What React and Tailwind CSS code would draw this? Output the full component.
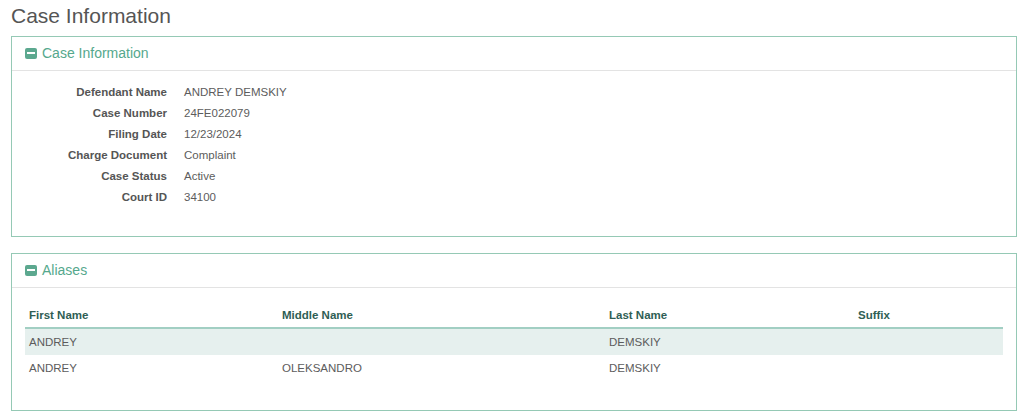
import React from 'react';

const details = [
  ['Defendant Name', 'ANDREY DEMSKIY'],
  ['Case Number', '24FE022079'],
  ['Filing Date', '12/23/2024'],
  ['Charge Document', 'Complaint'],
  ['Case Status', 'Active'],
  ['Court ID', '34100'],
];

const aliases = [
  { first: 'ANDREY', middle: '', last: 'DEMSKIY', suffix: '' },
  { first: 'ANDREY', middle: 'OLEKSANDRO', last: 'DEMSKIY', suffix: '' },
];

const MinusBox = () => (
  <span className="w-[12px] h-[11px] rounded-[2px] bg-[#5ca88f] flex items-center justify-center shrink-0">
    <span className="w-[8px] h-[2px] bg-white" />
  </span>
);

const Panel = ({ title, children, className = '' }) => (
  <section className={`border border-[#95c9b5] bg-white ${className}`}>
    <div className="h-[34px] flex items-center gap-[5px] px-[13px] pb-[1px] border-b border-[#e3e3e3]">
      <MinusBox />
      <h3 className="text-[14px] text-[#55a88d] leading-none">{title}</h3>
    </div>
    {children}
  </section>
);

export default function App() {
  return (
    <div className="w-[1024px] h-[419px] bg-white pl-[11px] pr-[7px] pt-[3px] text-[#555] font-['Liberation_Sans',Arial,sans-serif] overflow-hidden">
      <h1 className="text-[21px] leading-[26px] text-[#555] mb-[7px]">Case Information</h1>

      <Panel title="Case Information" className="h-[201px]">
        <dl className="grid grid-cols-[155px_1fr] gap-x-[17px] pt-[11px] text-[11.5px] leading-[21px]">
          {details.map(([label, value]) => (
            <React.Fragment key={label}>
              <dt className="text-right font-bold text-[#555]">{label}</dt>
              <dd className="text-[#5c5c5c]">{value}</dd>
            </React.Fragment>
          ))}
        </dl>
      </Panel>

      <Panel title="Aliases" className="mt-[16px] h-[158px]">
        <div className="px-[13px] pt-[16px]">
          <table className="w-full text-[11.5px] border-collapse">
            <thead>
              <tr className="border-b-2 border-[#a2cfc3] text-left text-[#2f5e54]">
                <th className="w-[253px] px-[4px] h-[24px] font-bold">First Name</th>
                <th className="w-[327px] px-[4px] font-bold">Middle Name</th>
                <th className="w-[249px] px-[4px] font-bold">Last Name</th>
                <th className="px-[4px] font-bold">Suffix</th>
              </tr>
            </thead>
            <tbody className="text-[#5c5c5c]">
              {aliases.map((a, i) => (
                <tr key={i} className={i % 2 === 0 ? 'bg-[#e6f0ee]' : ''}>
                  <td className="px-[4px] h-[27px] pt-[1px]">{a.first}</td>
                  <td className="px-[4px] pt-[1px]">{a.middle}</td>
                  <td className="px-[4px] pt-[1px]">{a.last}</td>
                  <td className="px-[4px] pt-[1px]">{a.suffix}</td>
                </tr>
              ))}
            </tbody>
          </table>
        </div>
      </Panel>
    </div>
  );
}
